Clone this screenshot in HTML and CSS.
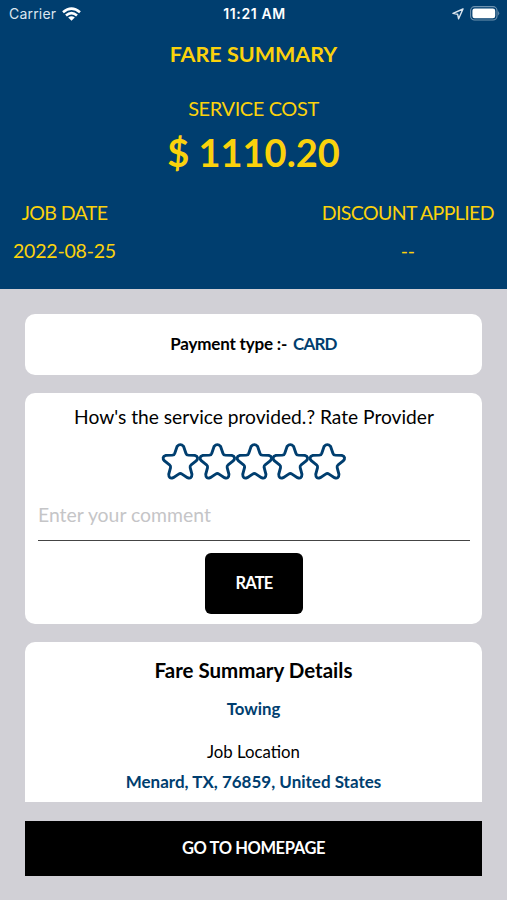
FILE: index.html
```
<!DOCTYPE html>
<html lang="en">
<head>
    <meta charset="UTF-8">
    <meta name="viewport" content="width=device-width, initial-scale=1.0">
    <title>Fare Summary</title>
    <link rel="stylesheet" href="styles.css">
</head>
<body>
    <svg class="defs" width="0" height="0">
        <symbol id="star" viewBox="0 0 37 37" overflow="visible">
            <path d="M15.2 3.4Q18.5 -.4 21.8 3.4L24.2 10.4Q24.8 12 26.6 12.1L33 12.3Q38 14 34.4 18L29.4 21.8Q28 23 28.4 24.8L30.2 31.4Q30.2 36.6 25.6 34.8L20.2 31.2Q18.5 30.1 16.8 31.2L11.4 34.8Q6.8 36.6 6.8 31.4L8.6 24.8Q9 23 7.6 21.8L2.6 18Q-1 14 4 12.3L10.4 12.1Q12.2 12 12.8 10.4Z"/>
        </symbol>
    </svg>

    <header>
        <div class="status-bar">
            <div class="carrier">
                <span>Carrier</span>
                <svg width="19" height="14" viewBox="0 0 19 14" fill="none" stroke="#fff" stroke-width="2.6">
                    <path d="M1 5.2Q9.5-1.8 18 5.2"/>
                    <path d="M4 8.5Q9.5 3.7 15 8.5"/>
                    <path d="M9.5 13.8L6.2 10.6Q9.5 7.9 12.8 10.6Z" fill="#fff" stroke="none"/>
                </svg>
            </div>
            <div class="time">11:21 AM</div>
            <div class="status-icons">
                <svg width="12" height="12" viewBox="0 0 12 12" fill="none" stroke="#dce6ef" stroke-width="1.4" stroke-linejoin="round">
                    <path d="M11 1L1 5.4L5.6 6.2L6.6 10.8Z"/>
                </svg>
                <svg width="30" height="15" viewBox="0 0 30 15">
                    <rect x=".6" y=".6" width="26.4" height="13.4" rx="4" fill="none" stroke="#6f93b0" stroke-width="1.1"/>
                    <rect x="2.4" y="2.4" width="22.8" height="9.8" rx="2.3" fill="#fff"/>
                    <path d="M28.2 5Q30.2 7.3 28.2 9.6Z" fill="#6f93b0"/>
                </svg>
            </div>
        </div>
        <h1>FARE SUMMARY</h1>
        <div class="cost-label">SERVICE COST</div>
        <div class="cost">$ 1110.20</div>
        <div class="info-row">
            <div class="info">
                <div class="info-label">JOB DATE</div>
                <div class="info-value">2022-08-25</div>
            </div>
            <div class="info">
                <div class="info-label">DISCOUNT APPLIED</div>
                <div class="info-value">--</div>
            </div>
        </div>
    </header>

    <main>
        <div class="card payment">Payment type :-&nbsp;<span class="blue">CARD</span></div>

        <form class="card rating">
            <div class="question">How's the service provided.? Rate Provider</div>
            <div class="stars">
                <svg><use href="#star"/></svg>
                <svg><use href="#star"/></svg>
                <svg><use href="#star"/></svg>
                <svg><use href="#star"/></svg>
                <svg><use href="#star"/></svg>
            </div>
            <input type="text" class="comment" placeholder="Enter your comment">
            <button type="button" class="rate">RATE</button>
        </form>

        <div class="card details">
            <h2>Fare Summary Details</h2>
            <div class="service blue">Towing</div>
            <div class="location-label">Job Location</div>
            <div class="location blue">Menard, TX, 76859, United States</div>
        </div>
    </main>

    <button type="button" class="home">GO TO HOMEPAGE</button>
</body>
</html>
```

FILE: styles.css
```
* {
    box-sizing: border-box;
    font-family: Lato, "Open Sans", sans-serif;
}
body {
    background-color: #d1d0d6;
    color: #000;
    margin: 0;
    height: 900px;
    overflow: hidden;
    display: flex;
    flex-direction: column;
}
.defs {
    display: none;
}
header {
    height: 289px;
    flex: none;
    background-color: #003e6f;
    color: #fbd20c;
    text-align: center;
}
.status-bar {
    display: grid;
    grid-template-columns: 1fr auto 1fr;
    align-items: center;
    height: 27px;
    padding: 0 7px 0 9px;
    color: #fff;
}
.status-bar span,
.time {
    font-family: Inter, sans-serif;
    font-size: 14px;
    letter-spacing: 0.2px;
}
.status-bar .time {
    font-weight: 600;
    letter-spacing: 0.6px;
}
.carrier,
.status-icons {
    display: flex;
    align-items: center;
    gap: 6px;
}
.carrier span {
    color: #dce6ef;
}
.status-icons {
    justify-content: flex-end;
}
h1 {
    margin: 12px 0 0;
    font-size: 21.5px;
    line-height: 30px;
}
.cost-label {
    margin-top: 24px;
    font-size: 20px;
    letter-spacing: -0.4px;
    line-height: 30px;
}
.cost {
    margin-top: 4px;
    font-size: 38px;
    font-weight: bold;
    line-height: 50px;
}
.info-row {
    display: flex;
    justify-content: space-between;
    margin-top: 17px;
    padding: 0 13px;
    font-size: 19.5px;
    line-height: 38px;
}
.info-label {
    letter-spacing: -0.6px;
}
.info-value {
    letter-spacing: -0.2px;
}
main {
    flex: none;
    height: 513px;
    overflow: hidden;
    padding: 25px 25px 0;
}
.card {
    background-color: #fff;
    border-radius: 10px;
    margin-bottom: 18px;
    text-align: center;
}
.blue {
    color: #003e6f;
}
.payment {
    display: flex;
    align-items: center;
    justify-content: center;
    height: 61px;
    padding-bottom: 2px;
    font-size: 17px;
    font-weight: bold;
    letter-spacing: -0.2px;
}
.payment .blue {
    letter-spacing: -0.8px;
    padding-left: 2px;
}
.rating {
    display: flex;
    flex-direction: column;
    align-items: center;
    height: 231px;
    padding: 10px 12px 10px 13px;
}
.question {
    font-size: 19.2px;
    line-height: 28px;
}
.stars {
    display: flex;
    margin-top: 12px;
}
.stars svg {
    width: 36.7px;
    height: 37px;
    fill: none;
    stroke: #003e6f;
    stroke-width: 2.9;
    overflow: visible;
}
.comment {
    width: 100%;
    height: 51px;
    margin-top: 10px;
    padding: 0 0 2px;
    border: none;
    border-bottom: 1px solid #444;
    font-size: 19.4px;
}
.comment::placeholder {
    color: #c5c5c7;
}
button {
    border: none;
    padding-bottom: 3px;
    background-color: #000;
    color: #fff;
    font-size: 16.5px;
    font-weight: bold;
    letter-spacing: -0.4px;
}
.rate {
    width: 98px;
    height: 61px;
    margin-top: 12px;
    border-radius: 6px;
    letter-spacing: -0.8px;
}
.details {
    height: 200px;
    padding-top: 14px;
}
h2 {
    margin: 0;
    font-size: 20.5px;
    line-height: 28px;
}
.service {
    margin-top: 11px;
    font-size: 16.8px;
    font-weight: bold;
    line-height: 28px;
}
.location-label {
    margin-top: 15px;
    font-size: 16.8px;
    line-height: 28px;
}
.location {
    margin-top: 2px;
    font-size: 17px;
    font-weight: bold;
    line-height: 28px;
}
.home {
    flex: none;
    height: 55px;
    margin: 19px 25px 0;
}
```
